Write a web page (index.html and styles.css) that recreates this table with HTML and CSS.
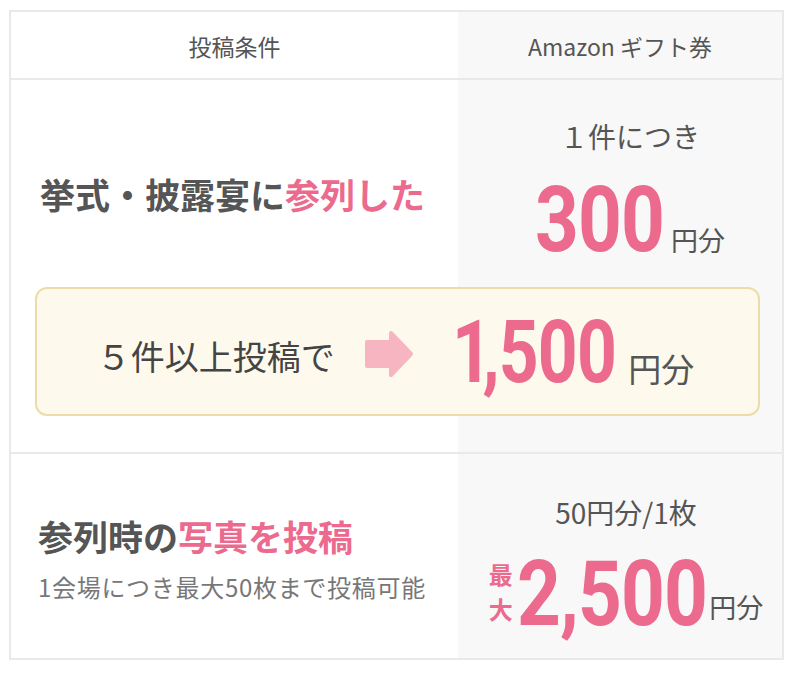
FILE: index.html
```html
<!DOCTYPE html>
<html lang="ja">
<head>
<meta charset="utf-8">
<title>投稿条件</title>
<link rel="stylesheet" href="styles.css">
</head>
<body>
<div class="table">
  <div class="row head">
    <div class="cell">投稿条件</div>
    <div class="cell">Amazon ギフト券</div>
  </div>
  <div class="row r1">
    <div class="cell cond-cell">
      <p class="cond">挙式・披露宴に<span class="pink">参列した</span></p>
    </div>
    <div class="cell prize">
      <p class="per">１件につき</p>
      <p class="amount"><span class="num n300">300</span><span class="unit">円分</span></p>
    </div>
    <div class="bonus">
      <span class="bonus-text">５件以上投稿で</span>
      <svg class="arrow" width="50" height="48" viewBox="0 0 50 48" aria-hidden="true">
        <path d="M3 12 H27 V3 L47 24 L27 45 V36 H3 Z" fill="#f7b4c1" stroke="#f7b4c1" stroke-width="4" stroke-linejoin="round"/>
      </svg>
      <span class="bonus-amount"><span class="num n1500"><span class="one">1</span>,500</span><span class="unit">円分</span></span>
    </div>
  </div>
  <div class="row r2">
    <div class="cell photo-cell">
      <p class="cond">参列時の<span class="pink">写真を投稿</span></p>
      <p class="sub">1会場につき最大50枚まで投稿可能</p>
    </div>
    <div class="cell prize">
      <p class="per">50円分/1枚</p>
      <p class="amount"><span class="max">最<br>大</span><span class="num n2500">2,500</span><span class="unit">円分</span></p>
    </div>
  </div>
</div>
</body>
</html>
```
FILE: styles.css
```css
* { box-sizing: border-box; }
body {
  margin: 0;
  background: #fff;
  font-family: "Noto Sans CJK JP", "Noto Sans", sans-serif;
  color: #555;
}
p { margin: 0; }
.table {
  margin: 10px 0 0 9px;
  width: 775px;
  border: 2px solid #e9e9e9;
}
.row {
  display: grid;
  grid-template-columns: 447px 324px;
  background: linear-gradient(to right, #fff 447px, #f8f8f8 447px);
  border-bottom: 2px solid #e9e9e9;
}
.row:last-child { border-bottom: none; }
.pink { color: #eb6a8d; }

.head { height: 68px; }
.head .cell {
  display: flex;
  align-items: center;
  justify-content: center;
  font-size: 23px;
  color: #555;
  padding-top: 2px;
}

.r1 { grid-template-rows: 207px auto; }
.cond-cell {
  display: flex;
  align-items: center;
  justify-content: center;
  padding-top: 20px;
  padding-right: 4px;
}
.cond {
  font-size: 35px;
  font-weight: 700;
  color: #555;
  line-height: 1.2;
  white-space: nowrap;
}
.prize {
  display: flex;
  flex-direction: column;
  align-items: center;
  padding-left: 20px;
}
.per {
  font-size: 28px;
  line-height: 1;
  color: #555;
  margin-top: 42px;
}
.amount {
  display: flex;
  align-items: baseline;
  line-height: 1;
  margin-top: 35px;
}
.num {
  display: inline-block;
  font-family: Roboto, "Liberation Sans", sans-serif;
  font-weight: 700;
  line-height: 0.8;
  color: #eb6a8d;
  transform: scaleX(0.85);
  transform-origin: left bottom;
  letter-spacing: -1px;
}
.n300 { font-size: 90px; margin-right: -22px; }
.unit {
  font-size: 27px;
  color: #555;
  margin-left: 6px;
}

.bonus {
  grid-column: 1 / 3;
  margin: 0 22px 36px 24px;
  height: 129px;
  background: #fdf9ec;
  border: 2px solid #ecdcaa;
  border-radius: 12px;
  display: flex;
  align-items: center;
  justify-content: center;
  padding-right: 4px;
}
.bonus-text {
  font-size: 34px;
  color: #444;
  margin-right: 29px;
  margin-top: 8px;
}
.arrow { margin-right: 38px; margin-top: 4px; }
.bonus-amount {
  display: flex;
  align-items: baseline;
  line-height: 1;
  margin-top: 2px;
}
.n1500 {
  font-size: 88px;
  transform: scaleX(0.79);
  margin-right: -44px;
}
.one { letter-spacing: -12px; }
.bonus-amount .unit { font-size: 33px; margin-left: 13px; }

.r2 { height: 204px; }
.photo-cell {
  display: flex;
  flex-direction: column;
  justify-content: center;
  padding-left: 27px;
  padding-top: 6px;
}
.photo-cell .cond { font-size: 35px; }
.sub {
  font-size: 24px;
  color: #777;
  margin-top: 12px;
  letter-spacing: 0.7px;
  white-space: nowrap;
}
.r2 .prize { padding-left: 12px; }
.r2 .per { margin-top: 44px; }
.r2 .amount { margin-top: 30px; align-items: flex-end; }
.max {
  font-size: 24px;
  font-weight: 700;
  color: #eb6a8d;
  line-height: 1.46;
  margin-right: 4px;
  margin-bottom: 2px;
}
.n2500 { font-size: 90px; margin-right: -34px; margin-bottom: -3px; }
.r2 .unit { margin-left: 3px; margin-bottom: 8px; }
```
